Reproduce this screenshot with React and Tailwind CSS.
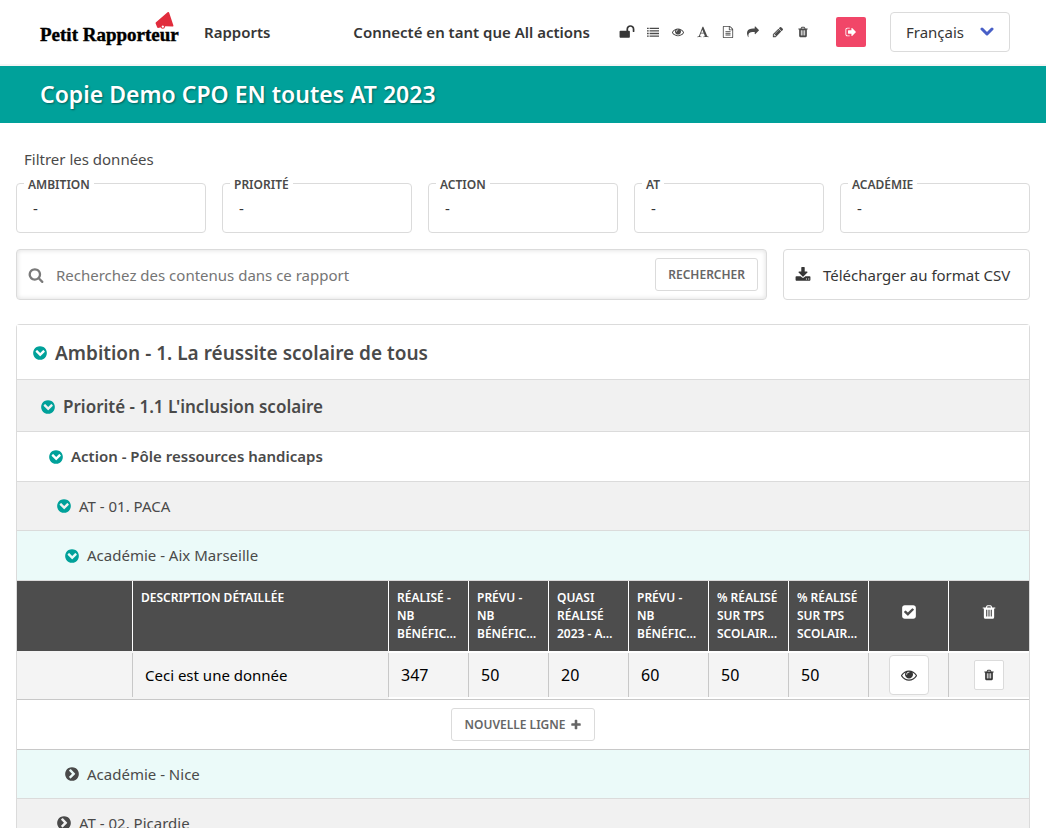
import React from "react";

const PATHS = {
  unlock:
    "M1728 576v256q0 26-19 45t-45 19h-64q-26 0-45-19t-19-45v-256q0-106-75-181t-181-75-181 75-75 181v192h96q40 0 68 28t28 68v576q0 40-28 68t-68 28h-960q-40 0-68-28t-28-68v-576q0-40 28-68t68-28h672v-192q0-185 131.5-316.5t316.5-131.5 316.5 131.5 131.5 316.5z",
  list:
    "M0 256h256v192h-256zM384 256h1408v192h-1408zM0 640h256v192h-256zM384 640h1408v192h-1408zM0 1024h256v192h-256zM384 1024h1408v192h-1408zM0 1408h256v192h-256zM384 1408h1408v192h-1408z",
  eye:
    "M1664 960q-152-236-381-353 61 104 61 225 0 185-131.5 316.5t-316.5 131.5-316.5-131.5-131.5-316.5q0-121 61-225-229 117-381 353 133 205 333.5 326.5t434.5 121.5 434.5-121.5 333.5-326.5zm-720-384q0-20-14-34t-34-14q-125 0-214.5 89.5t-89.5 214.5q0 20 14 34t34 14 34-14 14-34q0-86 61-147t147-61q20 0 34-14t14-34zm848 384q0 34-20 69-140 230-376.5 368.5t-499.5 138.5-499.5-139-376.5-368q-20-35-20-69t20-69q140-229 376.5-368t499.5-139 499.5 139 376.5 368q20 35 20 69z",
  font:
    "M789 559l-170 450q33 0 136.5 2t160.5 2q19 0 57-2-87-253-184-452zm-725 1105l2-79q23-7 56-12.5t57-10.5 49.5-14.5 44.5-29 31-50.5l237-616 280-724h128q8 14 11 21l205 480q33 78 106 257.5t114 274.5q15 34 58 144.5t72 168.5q20 45 35 57 19 15 88 29.5t84 20.5q6 38 6 57 0 5-.5 13.5t-.5 12.5q-63 0-190-8t-191-8q-76 0-215 7t-178 8q0-43 4-78l131-28q1 0 12.5-2.5t15.5-3.5 14.5-4.5 15-6.5 11-8 9-11 2.5-14q0-16-31-96.5t-72-177.5-42-100l-450-2q-26 58-76.5 195.5t-50.5 162.5q0 22 14 37.5t43.5 24.5 48.5 13.5 57 8.5 41 4q1 19 1 58 0 9-2 27-58 0-174.5-10t-174.5-10q-8 0-26.5 4t-21.5 4q-80 14-188 14z",
  file:
    "M1596 380q28 28 48 76t20 88v1152q0 40-28 68t-68 28h-1344q-40 0-68-28t-28-68v-1600q0-40 28-68t68-28h896q40 0 88 20t76 48zm-444-244v376h376q-10-29-22-41l-313-313q-12-12-41-22zm384 1528v-1024h-416q-40 0-68-28t-28-68v-416h-768v1536h1280zm-1024-864q0-14 9-23t23-9h704q14 0 23 9t9 23v64q0 14-9 23t-23 9h-704q-14 0-23-9t-9-23v-64zm736 224q14 0 23 9t9 23v64q0 14-9 23t-23 9h-704q-14 0-23-9t-9-23v-64q0-14 9-23t23-9h704zm0 256q14 0 23 9t9 23v64q0 14-9 23t-23 9h-704q-14 0-23-9t-9-23v-64q0-14 9-23t23-9h704z",
  share:
    "M1792 640q0 26-19 45l-512 512q-19 19-45 19t-45-19-19-45v-256h-224q-98 0-175.5 6t-154 21.5-133 42.5-105.5 69.5-80 101-48.5 138.5-17.5 181q0 55 5 123 0 6 2.5 23.5t2.5 26.5q0 15-8.5 25t-23.5 10q-16 0-28-17-7-9-13-22t-13.5-30-10.5-24q-127-285-127-451 0-199 53-333 162-403 875-403h224v-256q0-26 19-45t45-19 45 19l512 512q19 19 19 45z",
  pencil:
    "M491 1536l91-91-235-235-91 91v107h128v128h107zm523-928q0-22-22-22-10 0-17 7l-542 542q-7 7-7 17 0 22 22 22 10 0 17-7l542-542q7-7 7-17zm-54-192l416 416-832 832h-416v-416zm683 96q0 53-37 90l-166 166-416-416 166-165q36-38 90-38 53 0 91 38l235 234q37 39 37 91z",
  trash:
    "M704 1376v-704q0-14-9-23t-23-9h-64q-14 0-23 9t-9 23v704q0 14 9 23t23 9h64q14 0 23-9t9-23zm256 0v-704q0-14-9-23t-23-9h-64q-14 0-23 9t-9 23v704q0 14 9 23t23 9h64q14 0 23-9t9-23zm256 0v-704q0-14-9-23t-23-9h-64q-14 0-23 9t-9 23v704q0 14 9 23t23 9h64q14 0 23-9t9-23zm-544-992h448l-48-117q-7-9-17-11h-317q-10 2-17 11zm928 32v64q0 14-9 23t-23 9h-96v948q0 83-47 143.5t-113 60.5h-832q-66 0-113-58.5t-47-141.5v-952h-96q-14 0-23-9t-9-23v-64q0-14 9-23t23-9h309l70-167q15-37 54-63t79-26h320q40 0 79 26t54 63l70 167h309q14 0 23 9t9 23z",
  signOut:
    "M704 1440q0 4 1 20t.5 26.5-3 23.5-10 19.5-20.5 6.5h-320q-119 0-203.5-84.5t-84.5-203.5v-704q0-119 84.5-203.5t203.5-84.5h320q13 0 22.5 9.5t9.5 22.5q0 4 1 20t.5 26.5-3 23.5-10 19.5-20.5 6.5h-320q-66 0-113 47t-47 113v704q0 66 47 113t113 47h312l11.5 1 11.5 3 8 5.5 7 9 2 13.5zm928-544q0 26-19 45l-544 544q-19 19-45 19t-45-19-19-45v-288h-448q-26 0-45-19t-19-45v-384q0-26 19-45t45-19h448v-288q0-26 19-45t45-19 45 19l544 544q19 19 19 45z",
  search:
    "M1216 832q0-185-131.5-316.5t-316.5-131.5-316.5 131.5-131.5 316.5 131.5 316.5 316.5 131.5 316.5-131.5 131.5-316.5zm512 832q0 52-38 90t-90 38q-54 0-90-38l-343-342q-179 124-399 124-143 0-273.5-55.5t-225-150-150-225-55.5-273.5 55.5-273.5 150-225 225-150 273.5-55.5 273.5 55.5 225 150 150 225 55.5 273.5q0 220-124 399l343 343q37 37 37 90z",
  download:
    "M1344 1344q0-26-19-45t-45-19-45 19-19 45 19 45 45 19 45-19 19-45zm256 0q0-26-19-45t-45-19-45 19-19 45 19 45 45 19 45-19 19-45zm128-224v320q0 40-28 68t-68 28h-1472q-40 0-68-28t-28-68v-320q0-40 28-68t68-28h465l135 136q58 56 136 56t136-56l136-136h464q40 0 68 28t28 68zm-325-569q17 41-14 70l-448 448q-18 19-45 19t-45-19l-448-448q-31-29-14-70 17-39 59-39h256v-448q0-26 19-45t45-19h256q26 0 45 19t19 45v448h256q42 0 59 39z",
  checkSquare:
    "M813 1299l614-614q19-19 19-45t-19-45l-102-102q-19-19-45-19t-45 19l-467 467-211-211q-19-19-45-19t-45 19l-102 102q-19 19-19 45t19 45l358 358q19 19 45 19t45-19zm851-883v960q0 119-84.5 203.5t-203.5 84.5h-960q-119 0-203.5-84.5t-84.5-203.5v-960q0-119 84.5-203.5t203.5-84.5h960q119 0 203.5 84.5t84.5 203.5z",
  plus:
    "M1600 736v192q0 40-28 68t-68 28h-416v416q0 40-28 68t-68 28h-192q-40 0-68-28t-28-68v-416h-416q-40 0-68-28t-28-68v-192q0-40 28-68t68-28h416v-416q0-40 28-68t68-28h192q40 0 68 28t28 68v416h416q40 0 68 28t28 68z",
  chevronCircle:
    "M965 1235l454-454q19-19 19-45t-19-45l-102-102q-19-19-45-19t-45 19l-307 307-307-307q-19-19-45-19t-45 19l-102 102q-19 19-19 45t19 45l454 454q19 19 45 19t45-19zm699-339q0 209-103 385.5t-279.5 279.5-385.5 103-385.5-103-279.5-279.5-103-385.5 103-385.5 279.5-279.5 385.5-103 385.5 103 279.5 279.5 103 385.5z",
};

function Icon({ name, className }) {
  return (
    <svg viewBox="0 0 1792 1792" fill="currentColor" aria-hidden="true" className={className}>
      <path d={PATHS[name]} />
    </svg>
  );
}

function Logo() {
  return (
    <a href="#accueil" className="relative flex h-10 w-[136px] items-center text-black">
      <span className="pt-[6px] font-['Liberation_Serif',serif] text-[19px] leading-6 font-black whitespace-nowrap [-webkit-text-stroke:0.4px_black]">
        Petit Rapporteur
      </span>
      <svg viewBox="0 0 54 50" aria-hidden="true" className="absolute top-0 right-[2px] h-[17px] w-[19px]">
        <path d="M2 30 36 1Q40-1 41 3L53 39Q54 43 50 43L31 42 8 47Q6 47 5 44L1 34Q0 32 2 30Z" fill="#e12c3c" />
        <circle cx="22" cy="43" r="5" fill="#fff" stroke="#e12c3c" strokeWidth="3" />
      </svg>
    </a>
  );
}

const TOOLS = [
  ["list", "Structure"],
  ["eye", "Visibilité"],
  ["font", "Textes"],
  ["file", "Document"],
  ["share", "Partager"],
  ["pencil", "Modifier"],
  ["trash", "Supprimer"],
];

function Header() {
  return (
    <header className="flex h-[66px] items-center border-b-2 border-[#f5f5f5] pr-9 pl-10">
      <Logo />
      <a href="#rapports" className="ml-7 font-semibold">Rapports</a>
      <span className="ml-auto font-semibold whitespace-nowrap">Connecté en tant que All actions</span>
      <div className="ml-6 flex items-center">
        <button type="button" aria-label="Déverrouiller" className="flex h-8 w-[26px] items-center justify-center">
          <Icon name="unlock" className="size-4" />
        </button>
        {TOOLS.map(([name, label]) => (
          <button key={name} type="button" aria-label={label} className="flex h-8 w-[25px] items-center justify-center text-[#4a4a4a]">
            <Icon name={name} className="size-3" />
          </button>
        ))}
      </div>
      <button type="button" aria-label="Se déconnecter" className="ml-[21px] flex size-[30px] items-center justify-center rounded-[2px] bg-[#f14668] text-white">
        <Icon name="signOut" className="size-3" />
      </button>
      <div className="relative ml-6">
        <select aria-label="Langue" className="h-10 w-[120px] appearance-none rounded border border-[#dbdbdb] bg-white px-[15px]">
          <option>Français</option>
          <option>English</option>
        </select>
        <svg viewBox="0 0 14 10" aria-hidden="true" className="pointer-events-none absolute top-[15px] right-4 h-[10px] w-[14px]">
          <path d="M2 2 7 7 12 2" fill="none" stroke="#485fc7" strokeWidth="3" strokeLinecap="round" strokeLinejoin="round" />
        </svg>
      </div>
    </header>
  );
}

function Filter({ id, label }) {
  return (
    <fieldset className="min-w-0 flex-1 rounded border border-[#dbdbdb] pb-2">
      <legend className="ml-[7px] px-1 pt-1 text-xs leading-[14px] font-semibold text-[#4a4a4a] uppercase">
        <label htmlFor={id}>{label}</label>
      </legend>
      <select id={id} className="block h-8 w-full appearance-none bg-transparent px-4">
        <option>-</option>
      </select>
    </fieldset>
  );
}

const FILTERS = [
  ["ambition", "Ambition"],
  ["priorite", "Priorité"],
  ["action", "Action"],
  ["at", "AT"],
  ["academie", "Académie"],
];

const LEVEL = {
  ambition: "bg-white pt-[13px] pb-[11px] pl-4 text-[19px] leading-[30px] font-semibold",
  priorite: "bg-[#f1f1f1] pt-[13px] pb-[11px] pl-6 text-[17px] leading-[27px] font-semibold",
  action: "bg-white py-3 pl-8 leading-[25px] font-semibold",
  at: "bg-[#f1f1f1] py-3 pl-10 leading-6",
  academieOpen: "bg-[#ebfaf9] py-3 pl-12 leading-[25px]",
  academie: "bg-[#ebfaf9] py-3 pl-12 leading-6",
};

function Level({ kind, open, children }) {
  return (
    <button type="button" aria-expanded={open} className={`block w-full border-b border-[#dbdbdb] text-left text-[#4a4a4a] ${LEVEL[kind]}`}>
      <span className="flex items-center gap-[7px]">
        <Icon name="chevronCircle" className={open ? "-ml-px size-4 text-[#00a19a]" : "-ml-px size-4 -rotate-90"} />
        {children}
      </span>
    </button>
  );
}

const METRICS = [
  { head: ["Réalisé -", "Nb", "Bénéfic…"], value: "347" },
  { head: ["Prévu -", "Nb", "Bénéfic…"], value: "50" },
  { head: ["Quasi", "Réalisé", "2023 - A…"], value: "20" },
  { head: ["Prévu -", "Nb", "Bénéfic…"], value: "60" },
  { head: ["% Réalisé", "sur tps", "scolair…"], value: "50" },
  { head: ["% Réalisé", "sur tps", "scolair…"], value: "50" },
];

function DataTable() {
  return (
    <table className="w-full table-fixed border-separate border-spacing-0">
      <colgroup>
        <col />
        <col className="w-64" />
        {METRICS.map((m, i) => (
          <col key={i} className="w-20" />
        ))}
        <col className="w-20" />
        <col className="w-20" />
      </colgroup>
      <thead>
        <tr className="bg-[#4d4d4d] text-left align-top text-xs leading-[18px] text-white uppercase">
          <td className="border-r border-white" />
          <th scope="col" className="border-r border-white p-2 font-semibold">Description détaillée</th>
          {METRICS.map(({ head }, i) => (
            <th key={i} scope="col" className="border-r border-white p-2 font-semibold whitespace-nowrap">
              {head.map((line) => (
                <span key={line} className="block">{line}</span>
              ))}
            </th>
          ))}
          <th scope="col" aria-label="Validation" className="border-r border-white pb-2 align-middle">
            <Icon name="checkSquare" className="mx-auto size-4" />
          </th>
          <th scope="col" aria-label="Suppression" className="pb-2 align-middle">
            <Icon name="trash" className="mx-auto size-4" />
          </th>
        </tr>
      </thead>
      <tbody>
        <tr className="text-black">
          <td className="bg-[#f4f4f4] p-0">
            <div className="h-11 border-r border-[#c8c8c8]" />
          </td>
          <td className="bg-[#f4f4f4] p-0">
            <div className="flex h-11 items-center border-r border-[#c8c8c8] px-3">Ceci est une donnée</div>
          </td>
          {METRICS.map(({ value }, i) => (
            <td key={i} className="p-0 py-[2px]">
              <div className="flex h-11 items-center border-r border-[#c8c8c8] bg-[#f4f4f4] px-3 text-base">{value}</div>
            </td>
          ))}
          <td className="p-0 py-[2px]">
            <div className="flex h-11 items-center justify-center border-r border-[#c8c8c8] bg-[#f4f4f4]">
              <button type="button" aria-label="Voir la ligne" className="flex size-10 items-center justify-center rounded border border-[#dbdbdb] bg-white text-[#363636]">
                <Icon name="eye" className="size-4" />
              </button>
            </div>
          </td>
          <td className="p-0 py-[2px]">
            <div className="flex h-11 items-center justify-center bg-[#f4f4f4]">
              <button type="button" aria-label="Supprimer la ligne" className="flex size-[30px] items-center justify-center rounded-[2px] border border-[#dbdbdb] bg-white text-[#363636]">
                <Icon name="trash" className="size-3" />
              </button>
            </div>
          </td>
        </tr>
      </tbody>
    </table>
  );
}

export default function App() {
  return (
    <div className="bg-white font-['Noto_Sans',sans-serif] text-[15px] leading-6 text-[#363636]">
      <Header />
      <div className="bg-[#00a19a] px-10 pt-[10px] pb-[11px]">
        <h1 className="text-[23px] leading-9 font-semibold text-white [text-shadow:1px_1px_2px_rgba(0,0,0,0.4)]">
          Copie Demo CPO EN toutes AT 2023
        </h1>
      </div>
      <main className="px-4 pt-6">
        <p className="pl-2 text-[#4a4a4a]">Filtrer les données</p>
        <div className="mt-[3px] flex gap-4">
          {FILTERS.map(([id, label]) => (
            <Filter key={id} id={id} label={label} />
          ))}
        </div>
        <div className="mt-4 flex gap-4">
          <form className="flex h-[51px] min-w-0 flex-1 items-center rounded border border-[#dbdbdb] pr-2 pl-[11px] shadow-[inset_0_0_4px_1px_rgba(0,0,0,0.1)]">
            <Icon name="search" className="size-4 shrink-0 text-[#7a7a7a]" />
            <input
              type="text"
              aria-label="Recherche"
              placeholder="Recherchez des contenus dans ce rapport"
              className="ml-3 min-w-0 flex-1 bg-transparent outline-none placeholder:text-[#757575]"
            />
            <button type="button" className="h-[33px] rounded-[3px] border border-[#dbdbdb] bg-white px-3 text-xs font-semibold text-[#666] uppercase">
              Rechercher
            </button>
          </form>
          <a href="#csv" className="flex h-[51px] w-[247px] items-center rounded border border-[#dbdbdb] pl-[11px] whitespace-nowrap">
            <Icon name="download" className="mr-3 size-4" />
            Télécharger au format CSV
          </a>
        </div>
        <section className="mt-6 rounded-t border border-b-0 border-[#dbdbdb]">
          <Level kind="ambition" open>Ambition - 1. La réussite scolaire de tous</Level>
          <Level kind="priorite" open>Priorité - 1.1 L'inclusion scolaire</Level>
          <Level kind="action" open>Action - Pôle ressources handicaps</Level>
          <Level kind="at" open>AT - 01. PACA</Level>
          <Level kind="academieOpen" open>Académie - Aix Marseille</Level>
          <DataTable />
          <div className="flex h-[51px] items-center justify-center border-y border-[#c8c8c8]">
            <button type="button" className="flex h-[33px] items-center gap-1 rounded-[3px] border border-[#dbdbdb] bg-white px-3 text-xs font-semibold text-[#666] uppercase">
              Nouvelle ligne
              <Icon name="plus" className="size-3" />
            </button>
          </div>
          <Level kind="academie" open={false}>Académie - Nice</Level>
          <Level kind="at" open={false}>AT - 02. Picardie</Level>
        </section>
      </main>
    </div>
  );
}
